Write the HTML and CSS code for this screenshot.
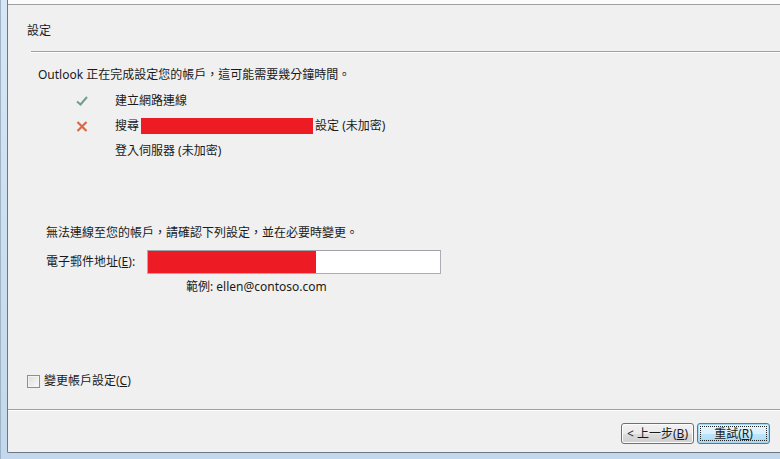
FILE: index.html
```html
<!DOCTYPE html>
<html lang="zh-Hant">
<head>
<meta charset="utf-8">
<title>設定</title>
<link rel="stylesheet" href="styles.css">
</head>
<body>
<div class="frame">
  <div class="dialog">
    <div class="topstrip"></div>
    <div class="header">設定</div>
    <div class="hsep"></div>
    <div class="content">
      <p class="intro">Outlook 正在完成設定您的帳戶，這可能需要幾分鐘時間。</p>
      <div class="steps">
        <div class="step">
          <span class="icon"><svg width="12" height="10" viewBox="0 0 12 10"><path d="M1 5.5 L4.5 8.5 L11 1" fill="none" stroke="#6f9e90" stroke-width="2"/></svg></span>
          <span>建立網路連線</span>
        </div>
        <div class="step">
          <span class="icon"><svg width="12" height="11" viewBox="0 0 12 11"><path d="M1.5 1 L10.5 10 M10.5 1 L1.5 10" fill="none" stroke="#da6a45" stroke-width="2.2"/></svg></span>
          <span>搜尋</span><span class="redact"></span><span>設定 (未加密)</span>
        </div>
        <div class="step">
          <span class="icon"></span>
          <span>登入伺服器 (未加密)</span>
        </div>
      </div>
      <p class="warn">無法連線至您的帳戶，請確認下列設定，並在必要時變更。</p>
      <div class="field">
        <label class="flabel">電子郵件地址(<u>E</u>):</label>
        <div class="input"><span class="redfill"></span></div>
      </div>
      <p class="example">範例: ellen@contoso.com</p>
    </div>
    <div class="check">
      <span class="box"></span>
      <span>變更帳戶設定(<u>C</u>)</span>
    </div>
    <div class="footer">
      <button class="btn">&lt; 上一步(<u>B</u>)</button>
      <button class="btn default">重試(<u>R</u>)</button>
    </div>
  </div>
</div>
</body>
</html>
```

FILE: styles.css
```css
* { box-sizing: border-box; }
html, body { margin: 0; padding: 0; }
body {
  width: 780px;
  height: 459px;
  overflow: hidden;
  background: #cfe1f2;
  font-family: "Noto Sans", "Noto Sans CJK TC", sans-serif;
  font-size: 12px;
  color: #1a1a1a;
}
.frame {
  height: 459px;
  padding: 0 0 6px 6px;
  background: linear-gradient(#d6e6f4, #c3d8ec);
  border-left: 1px solid #9fb3c6;
}
.dialog {
  height: 453px;
  background: #f0f0f0;
  border-left: 1px solid #6b7785;
  border-bottom: 1px solid #6b7785;
  border-bottom-left-radius: 2px;
  display: flex;
  flex-direction: column;
}
.topstrip {
  height: 5px;
  background: #fbfbfb;
  border-bottom: 1px solid #a0a0a0;
}
.header {
  height: 46px;
  padding: 18px 0 0 19px;
  line-height: 16px;
}
.hsep {
  margin-left: 23px;
  height: 2px;
  border-top: 1px solid #a0a0a0;
  border-bottom: 1px solid #fdfdfd;
}
.content {
  padding-left: 30px;
}
p { margin: 0; line-height: 16px; }
.intro { margin-top: 14px; }
.steps {
  margin-top: 10px;
  padding-left: 38px;
  display: flex;
  flex-direction: column;
  gap: 9px;
}
.step {
  display: flex;
  align-items: center;
  height: 16px;
  line-height: 16px;
}
.icon {
  width: 39px;
  display: flex;
  align-items: center;
}
.redact {
  display: inline-block;
  width: 172px;
  height: 16px;
  background: #ed1c24;
  margin: 0 2px 0 2px;
}
.warn {
  margin-top: 66px;
  padding-left: 8px;
}
.field {
  margin-top: 9px;
  padding-left: 8px;
  display: flex;
  align-items: center;
}
.flabel {
  width: 101px;
  line-height: 16px;
}
.input {
  width: 294px;
  height: 24px;
  border: 1px solid #abadb3;
  border-top-color: #a0a2aa;
  background: #fff;
  padding: 0;
}
.redfill {
  display: block;
  width: 168px;
  height: 22px;
  background: #ed1c24;
}
.example {
  margin-top: 5px;
  padding-left: 148px;
}
.check {
  margin-top: 78px;
  padding-left: 19px;
  display: flex;
  align-items: center;
  gap: 4px;
  line-height: 16px;
}
.box {
  width: 13px;
  height: 13px;
  border: 1px solid #8f8f8f;
  background: linear-gradient(135deg, #dcdcdc, #fbfbfb);
  box-shadow: inset 0 0 0 1px #f4f4f4;
}
.footer {
  margin-top: 20px;
  border-top: 1px solid #a0a0a0;
  box-shadow: inset 0 1px 0 #fdfdfd;
  flex: 1;
  display: flex;
  justify-content: flex-end;
  align-items: flex-start;
  gap: 3px;
  padding: 13px 10px 0 0;
}
.btn {
  width: 73px;
  height: 21px;
  font-family: "Noto Sans", "Noto Sans CJK TC", sans-serif;
  font-size: 12px;
  line-height: 16px;
  color: #1a1a1a;
  border: 1px solid #707070;
  border-radius: 3px;
  background: linear-gradient(#f2f2f2 0%, #ebebeb 50%, #dddddd 51%, #cfcfcf 100%);
  padding: 0;
  box-shadow: inset 0 0 0 1px #fcfcfc;
}
.btn.default {
  border-color: #3c7fb1;
  box-shadow: inset 0 0 0 1px #a7d8f3;
  background: linear-gradient(#eaf6fd 0%, #d9f0fc 50%, #bee6fd 51%, #a7d9f5 100%);
  outline: 1px dotted #222;
  outline-offset: -4px;
}
u { text-decoration: underline; text-underline-offset: 1px; }
```
